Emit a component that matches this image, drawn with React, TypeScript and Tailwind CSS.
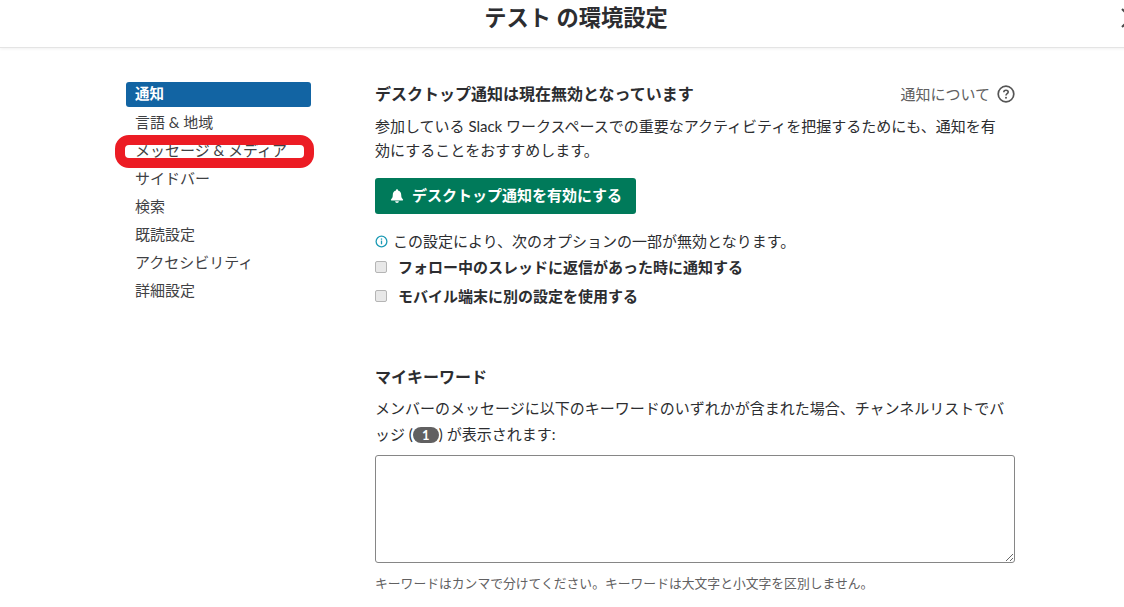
import { useState } from 'react';

const navItems = ['言語 & 地域', 'メッセージ & メディア', 'サイドバー', '検索', '既読設定', 'アクセシビリティ', '詳細設定'];

function BellIcon() {
  return (
    <svg viewBox="0 0 16 16" className="w-[16px] h-[16px] fill-white shrink-0">
      <path d="M8 1.200c.6 0 1 .4 1 1v.4c2 .5 3.200 2.200 3.200 4.200 0 2.600.7 3.600 1.800 4.700.3.4.1.9-.4.9H2.400c-.5 0-.7-.5-.4-.9 1.100-1.100 1.800-2.100 1.800-4.700 0-2 1.200-3.700 3.200-4.200v-.4c0-.6.400-1 1-1z" />
      <path d="M6.200 13.200h3.600c0 1-.8 1.700-1.800 1.700s-1.800-.7-1.800-1.700z" />
    </svg>
  );
}

function InfoIcon() {
  return (
    <svg viewBox="0 0 14 14" className="w-[13px] h-[13px] shrink-0 mr-[5px]">
      <circle cx="7" cy="7" r="5.800" fill="none" stroke="#1d9bb5" strokeWidth="1.400" />
      <rect x="6.300" y="6" width="1.400" height="4" fill="#1d9bb5" />
      <rect x="6.300" y="3.700" width="1.400" height="1.400" fill="#1d9bb5" />
    </svg>
  );
}

function Check({ label }: { label: string }) {
  const [on, setOn] = useState(false);
  return (
    <label className="flex items-center h-[28px]">
      <input
        type="checkbox"
        checked={on}
        onChange={() => setOn(!on)}
        className="appearance-none w-[12px] h-[12px] rounded-[2px] border border-[#b5b5b5] bg-[#e8e8e8] mr-[11px]"
      />
      <span className="font-bold text-[15px] text-[#2c2d30]">{label}</span>
    </label>
  );
}

export default function App() {
  return (
    <div className="h-[607px] w-[1124px] overflow-hidden bg-white text-[#2c2d30] font-['Lato','Noto_Sans_CJK_JP',sans-serif]">
      <header className="relative w-[1152px] h-[48px] flex items-center justify-center border-b border-[#e4e4e4] shadow-[0_1px_3px_rgba(0,0,0,0.06)]">
        <h1 className="text-[22.250px] font-bold -mt-[12px] leading-[36px]">テスト の環境設定</h1>
        <svg viewBox="0 0 20 20" className="absolute left-[1121px] top-[8px] w-[20px] h-[20px]">
          <path d="M1 1l18 18M19 1L1 19" fill="none" stroke="#4a4a4a" strokeWidth="2" />
        </svg>
      </header>

      <div className="flex pl-[126px] pt-[34px]">
        <nav className="w-[185px] mr-[64px] shrink-0 relative">
          <div className="h-[25px] rounded-[3px] bg-[#1264a3] text-white font-bold text-[14.500px] leading-[24px] pl-[9px] mb-[1.500px]">通知</div>
          <ul>
            {navItems.map((item) => (
              <li key={item} className="h-[28px] leading-[27px] pl-[9px] text-[15px] text-[#3f4144] whitespace-nowrap">{item}</li>
            ))}
          </ul>
          {/* red annotation marker */}
          <div className="absolute left-[-11px] top-[53px] w-[199px] h-[33px] rounded-[14px] border-y-[10px] border-x-[10px] border-[#ec1c24]" />
        </nav>

        <main className="w-[640px] shrink-0">
          <div className="flex items-center justify-between h-[24px]">
            <h2 className="text-[16px] font-bold">デスクトップ通知は現在無効となっています</h2>
            <div className="flex items-center text-[15px] text-[#616061]">
              通知について
              <svg viewBox="0 0 18 18" className="w-[18px] h-[18px] ml-[7px]">
                <circle cx="9" cy="9" r="7.800" fill="none" stroke="#555" strokeWidth="1.700" />
                <path d="M6.800 7.200c0-1.300 1-2 2.200-2s2.200.8 2.200 1.900c0 1.600-2.200 1.600-2.200 3.300" fill="none" stroke="#555" strokeWidth="1.600" />
                <circle cx="9" cy="12.700" r="1" fill="#555" />
              </svg>
            </div>
          </div>
          <p className="mt-[8px] w-[625px] text-[15px] leading-[24px]">
            参加している Slack ワークスペースでの重要なアクティビティを把握するためにも、通知を有効にすることをおすすめします。
          </p>
          <button className="mt-[16px] h-[36px] w-[261px] flex items-center justify-center gap-[7px] rounded-[3px] bg-[#007a5a] text-white font-bold text-[15px]">
            <BellIcon />
            <span className="-mt-[2px]">デスクトップ通知を有効にする</span>
          </button>
          <div className="mt-[16px] flex items-center h-[22px] text-[15px]">
            <InfoIcon />
            この設定により、次のオプションの一部が無効となります。
          </div>
          <div className="mt-[1px] flex flex-col gap-[1px]">
            <Check label="フォロー中のスレッドに返信があった時に通知する" />
            <Check label="モバイル端末に別の設定を使用する" />
          </div>

          <h2 className="mt-[55px] text-[16px] font-bold leading-[24px]">マイキーワード</h2>
          <p className="mt-[6px] text-[15px] leading-[26px]">
            メンバーのメッセージに以下のキーワードのいずれかが含まれた場合、チャンネルリストでバッジ (
            <span className="inline-block w-[26px] h-[16px] align-[0px] rounded-full bg-[#616061] text-white text-[13px] font-bold leading-[16px] text-center">1</span>
            ) が表示されます:
          </p>
          <textarea className="block mt-[8px] w-[640px] h-[108px] rounded-[3px] border border-[#868686] bg-white" />
          <p className="mt-[11px] text-[12.800px] text-[#616061] leading-[18px]">キーワードはカンマで分けてください。キーワードは大文字と小文字を区別しません。</p>
        </main>
      </div>
    </div>
  );
}
